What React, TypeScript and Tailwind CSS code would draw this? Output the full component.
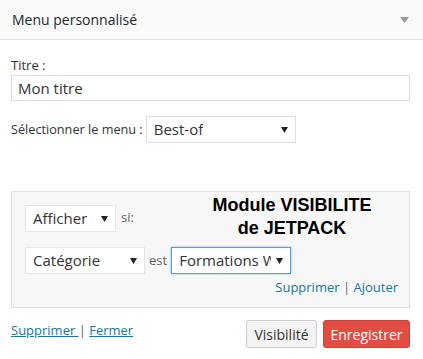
const Caret = () => (
  <svg width="7" height="6" viewBox="0 0 7 6" className="shrink-0">
    <path d="M0 0 L7 0 L3.5 6 Z" fill="#222" />
  </svg>
);

const Select = ({ label, className, textClass = '' }: { label: string; className: string; textClass?: string }) => (
  <div className={`flex items-center justify-between bg-white border pl-[7px] pr-[7px] text-[15px] text-[#333] ${className}`}>
    <span className={`whitespace-nowrap overflow-hidden ${textClass}`}>{label}</span>
    <Caret />
  </div>
);

export default function App() {
  return (
    <div className="w-[423px] h-[359px] bg-white text-[#333] overflow-hidden" style={{ fontFamily: '"Open Sans", sans-serif' }}>
      {/* Header */}
      <header className="h-[40px] bg-[#f9f9f9] border-b border-[#e5e5e5] flex items-center justify-between pl-3 pr-[14px]">
        <span className="text-[14px] text-[#23282d]">Menu personnalisé</span>
        <svg width="9" height="6" viewBox="0 0 9 6">
          <path d="M0 0 L9 0 L4.5 6 Z" fill="#999" />
        </svg>
      </header>

      <div className="px-[11px] pr-[13px]">
        {/* Titre */}
        <div className="mt-[16px] text-[13px] leading-[18px]">Titre :</div>
        <div className="mt-[1px] h-[26px] border border-[#ddd] flex items-center pl-[6px] text-[15px] text-[#333]">
          Mon titre
        </div>

        {/* Menu */}
        <div className="mt-[15px] flex items-center gap-[3px] text-[12.7px]">
          <span>Sélectionner le menu :</span>
          <Select label="Best-of" className="w-[150px] h-[27px] border-[#ddd]" />
        </div>

        {/* Visibility box */}
        <div className="mt-[48px] h-[117px] bg-[#f7f7f7] border border-[#dfdfdf] pl-[13px] pr-[11px] pt-[13px] relative">
          <div className="flex items-start gap-[5px]">
            <Select label="Afficher" className="w-[91px] h-[27px] border-[#e5e5e5]" />
            <span className="text-[13px] text-[#666] pt-[3px]">si:</span>
          </div>
          <div className="absolute left-[160px] top-[2px] w-[240px] text-center text-[18px] leading-[23px] font-bold text-black" style={{ fontFamily: '"Liberation Sans", Arial, sans-serif' }}>
            Module VISIBILITE
            <br />
            de JETPACK
          </div>
          <div className="mt-[15px] flex items-center gap-[4px]">
            <Select label="Catégorie" className="w-[120px] h-[27px] border-[#e5e5e5]" />
            <span className="text-[13px] text-[#666]">est</span>
            <Select
              label="Formations W"
              textClass="w-[92px]"
              className="w-[120px] h-[27px] border-[#5b9dd9] shadow-[0_0_2px_rgba(30,140,190,0.6)]"
            />
          </div>
          <div className="mt-[4px] text-right text-[13px] text-[#21759b]">
            Supprimer <span className="text-[#666]">|</span> Ajouter
          </div>
        </div>

        {/* Footer */}
        <div className="mt-[12px] flex items-start justify-between">
          <div className="text-[13px] text-[#21759b] mt-[1px]">
            <span className="underline">Supprimer </span>
            <span className="text-[#666]">|</span> <span className="underline">Fermer</span>
          </div>
          <div className="flex gap-[6px]">
            <button className="h-[28px] w-[71px] rounded-[3px] border border-[#ccc] bg-[#f3f3f3] text-[14px] text-[#333] shadow-[inset_0_1px_0_#fff]">
              Visibilité
            </button>
            <button className="h-[28px] w-[87px] rounded-[3px] border border-[#c9413a] bg-[#e14d43] text-[14px] text-white">
              Enregistrer
            </button>
          </div>
        </div>
      </div>
    </div>
  );
}
